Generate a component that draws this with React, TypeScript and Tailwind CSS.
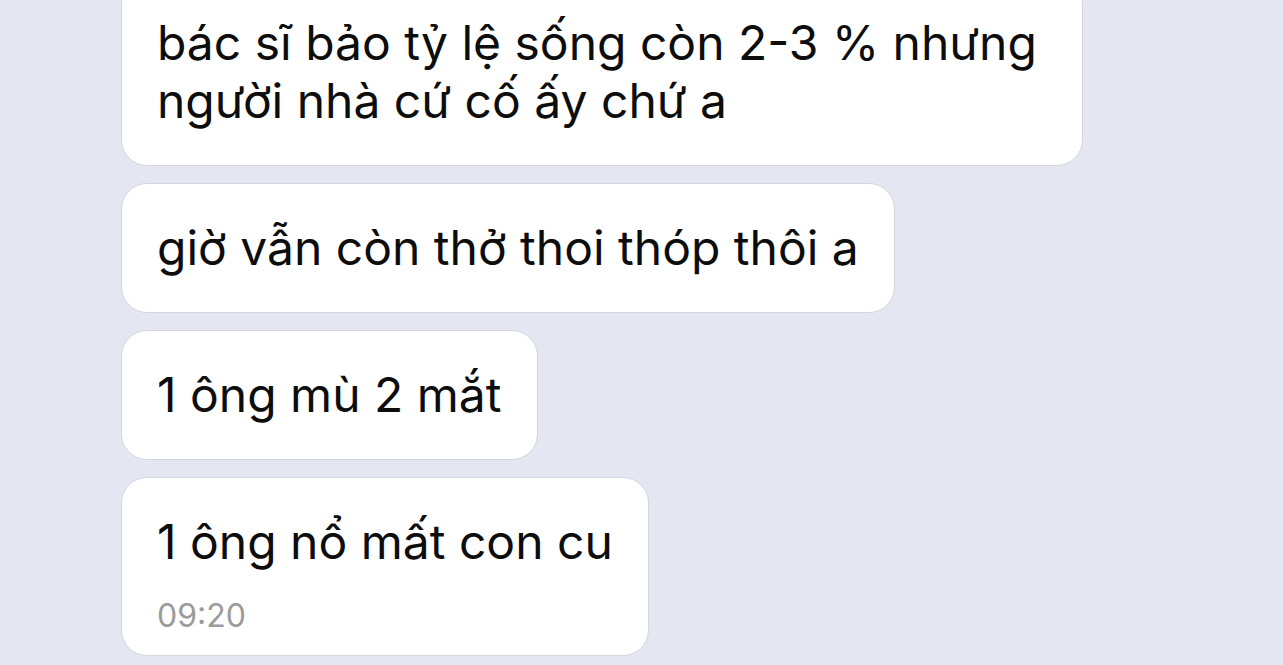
export default function App() {
  const bubble =
    "bg-white rounded-[26px] border border-[#d3d6dd] px-[35px] py-[35px] text-[48px] leading-[58px] text-[#0d0d0d]";
  return (
    <div
      className="w-[1283px] h-[665px] overflow-hidden bg-[#e4e7f1]"
      style={{ fontFamily: "Inter, 'Noto Sans', sans-serif" }}
    >
      <div className="flex flex-col items-start gap-[17px] pl-[121px] -mt-[22px]">
        <div className={`${bubble} w-[962px]`}>
          bác sĩ bảo tỷ lệ sống còn 2-3 % nhưng
          <br />
          người nhà cứ cố ấy chứ a
        </div>
        <div className={bubble}>giờ vẫn còn thở thoi thóp thôi a</div>
        <div className={bubble}>1 ông mù 2 mắt</div>
        <div className={`${bubble} pb-[19px]`}>
          <div>1 ông nổ mất con cu</div>
          <div className="text-[32px] leading-[40px] mt-[25px] text-[#9b9b9b]">09:20</div>
        </div>
      </div>
    </div>
  );
}
